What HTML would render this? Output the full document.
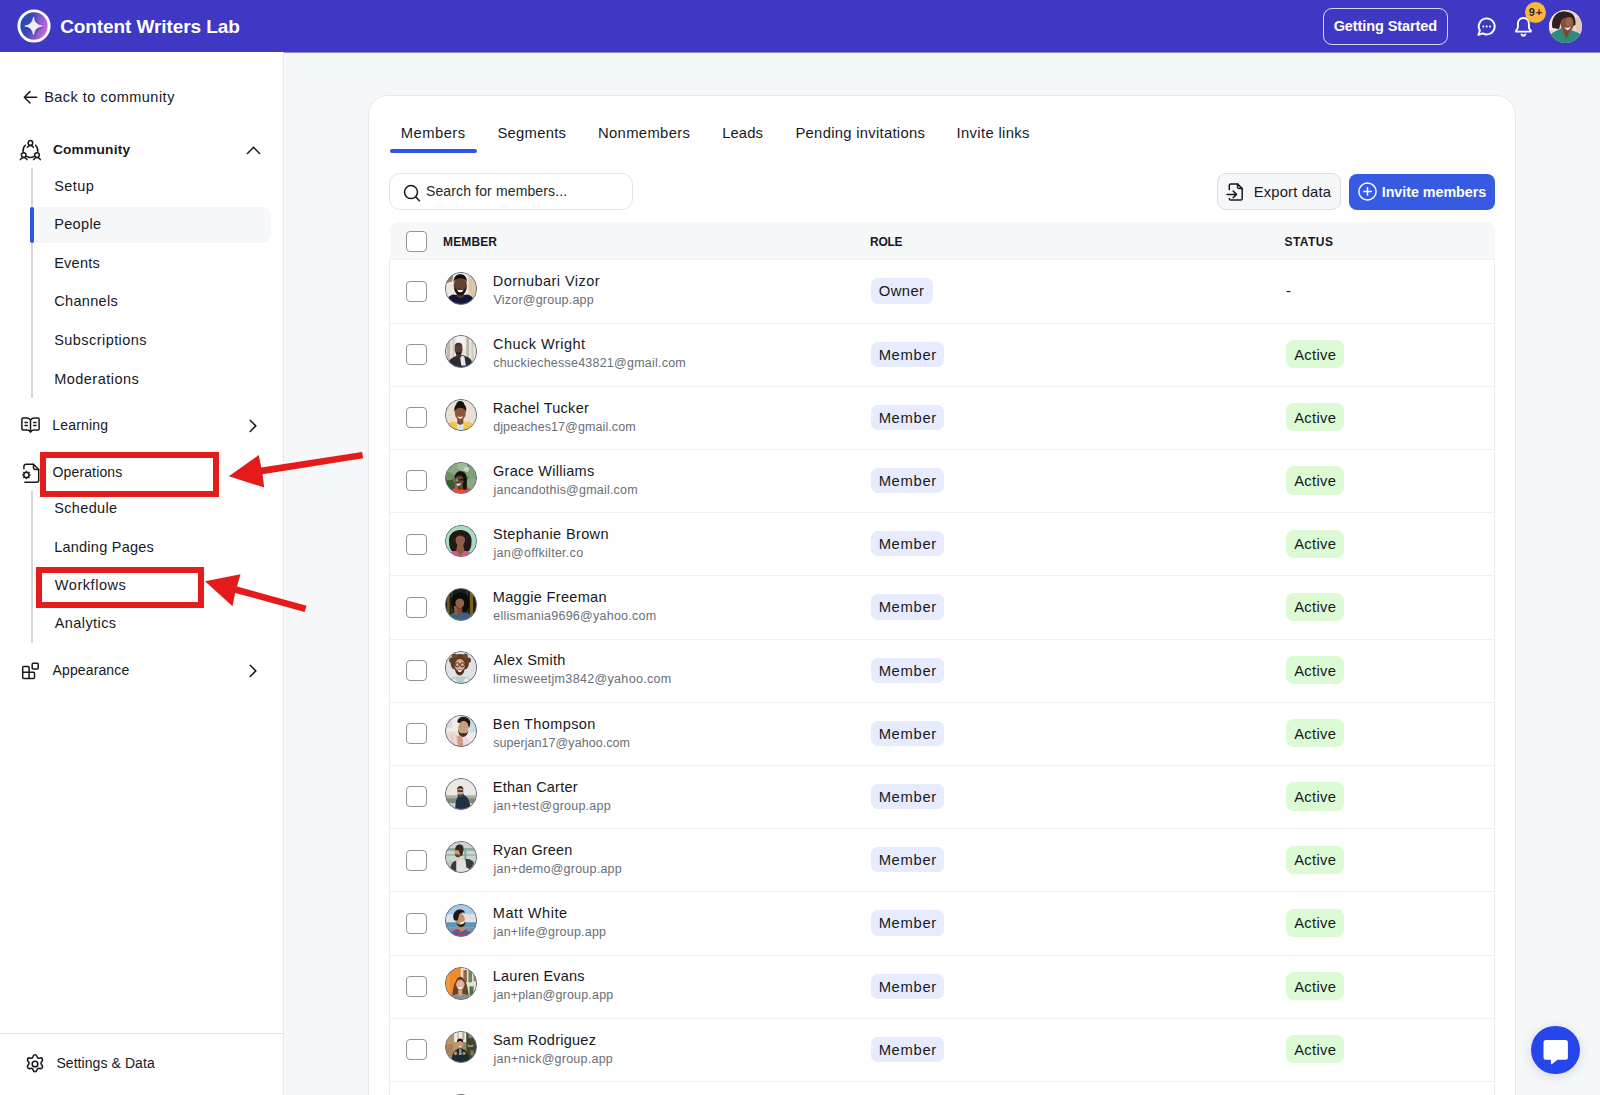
<!DOCTYPE html>
<html><head><meta charset="utf-8"><title>People</title>
<style>
*{box-sizing:border-box;margin:0;padding:0}
html,body{width:1600px;height:1095px;overflow:hidden;background:#f6f7f9;font-family:"Liberation Sans",sans-serif;color:#17191e}
svg{position:absolute;overflow:visible}
.ic{fill:none;stroke:#17191e;stroke-width:1.5;stroke-linecap:round;stroke-linejoin:round}
#hdr{position:absolute;left:0;top:0;width:1600px;height:52px;background:#3f38c4}
#side{position:absolute;left:0;top:52px;width:284px;height:1043px;background:#fff;border-right:1px solid #e8e9ed}
.t{position:absolute;white-space:nowrap;line-height:20px;height:20px}
#card{position:absolute;left:368px;top:95px;width:1148px;height:1040px;background:#fff;border:1px solid #e7e8ec;border-radius:20px}
.row{position:absolute;left:390px;width:1105px;height:1px;background:#eef0f3}
.cb{position:absolute;left:406px;width:21px;height:21px;border:1.5px solid #909399;border-radius:4px;background:#fff}
.av{position:absolute;left:444.6px;width:32.6px;height:32.6px;border-radius:50%;overflow:hidden;border:1.2px solid #666b80;background:#999}
.av svg{left:-1.2px;top:-1.2px;width:32.6px;height:32.6px;filter:blur(.6px)}
.pill{position:absolute;border-radius:6.5px}
</style></head><body>
<div id="hdr"><svg style="left:17.400px;top:9.400px" width="34" height="34" viewBox="0 0 34 34"><defs><linearGradient id="lg" x1="0" y1="0.2" x2="1" y2="0.5"><stop offset="0" stop-color="#0f52b5"/><stop offset=".4" stop-color="#3f47b8"/><stop offset=".75" stop-color="#9a5fd2"/><stop offset="1" stop-color="#cf68e2"/></linearGradient><filter id="sh" x="-30%" y="-30%" width="160%" height="160%"><feDropShadow dx=".6" dy=".9" stdDeviation="1.100" flood-color="#0a0a50" flood-opacity=".55"/></filter></defs><circle cx="17" cy="17" r="15.100" fill="url(#lg)" stroke="#fff" stroke-width="2.900"/><path d="M16.500 8.300Q17.500 16 25.200 17Q17.500 18 16.500 25.700Q15.500 18 7.800 17Q15.500 16 16.500 8.300z" fill="#f1ecfc" stroke="#f1ecfc" stroke-width=".7" stroke-linejoin="round" filter="url(#sh)"/></svg><div class="t" style="left:60.13px;top:16.50px;font-size:19px;color:#fff;letter-spacing:-0.079px;font-weight:bold">Content Writers Lab</div><div style="position:absolute;left:1323px;top:7.500px;width:125px;height:37.500px;border:1.500px solid rgba(255,255,255,.8);border-radius:9px"></div><div class="t" style="left:1333.64px;top:16.00px;font-size:14.5px;color:#fff;letter-spacing:-0.083px;font-weight:bold">Getting Started</div><svg style="left:1475.500px;top:16px" width="21" height="21" viewBox="0 0 21 21"><path d="M10.700 2.400a8 8 0 1 1-3.900 15L2.400 18.900l1.500-4.400A8 8 0 0 1 10.700 2.400z" fill="none" stroke="#fff" stroke-width="1.900" stroke-linejoin="round"/><circle cx="7.300" cy="10.500" r="1" fill="#fff"/><circle cx="10.700" cy="10.500" r="1" fill="#fff"/><circle cx="14.100" cy="10.500" r="1" fill="#fff"/></svg><svg style="left:1513px;top:15.500px" width="21" height="22" viewBox="0 0 21 22"><path d="M10.400 2c-3.400 0-5.500 2.600-5.500 5.700v3.400c0 1.400-.7 2.600-1.900 3.700v.8h14.800v-.8c-1.200-1.100-1.900-2.300-1.900-3.700V7.700c0-3.100-2.100-5.700-5.500-5.700z" fill="none" stroke="#fff" stroke-width="1.900" stroke-linejoin="round"/><path d="M8.600 18.400a1.900 1.900 0 0 0 3.600 0" fill="none" stroke="#fff" stroke-width="1.900" stroke-linecap="round"/></svg><div style="position:absolute;left:1525px;top:2.300px;width:21px;height:21px;border-radius:50%;background:#f9b63c;color:#2b2540;font-weight:bold;font-size:11px;line-height:20.500px;text-align:center;letter-spacing:.9px;text-indent:.9px">9+</div><div style="position:absolute;left:1549px;top:9.500px;width:33px;height:33px;border-radius:50%;overflow:hidden;background:#ead8ca"><svg style="left:0;top:0;filter:blur(.7px)" width="33" height="33" viewBox="0 0 33 33"><rect x="-2" y="-2" width="37" height="37" fill="#ead8ca"/><rect x="-2" y="-2" width="9" height="22" fill="#f3ebe4"/><rect x="27" y="8" width="8" height="14" fill="#e2c9b6"/><path d="M3.500 18c-1.500-6 .5-12 5.500-15c4-2.300 11-2 14.500 1c2.500 2.500 3.500 7 3 11l-2.500 1-1-6-10-1-3 10z" fill="#2e201d"/><path d="M-1 34c0-6 2-10 6-12l8-4 4 9 5-7 8 3c2 2 3 6 3 11z" fill="#2e8c7c"/><path d="M12.500 17l4.500 12 5.500-10z" fill="#7a4737"/><ellipse cx="18.200" cy="13.500" rx="6.500" ry="8.400" fill="#84503d"/><ellipse cx="20" cy="12" rx="3.500" ry="4.500" fill="#9a634d"/><path d="M15.800 17.300q3 1.300 6-.8q-1.200 3.600-3.400 3.600t-2.600-2.800z" fill="#f6f0f0"/><path d="M11.700 10.500c.8-4 3.800-6.500 7.300-6.500s5.500 1.500 6 4c-2-1-4-1.300-6.500-.8s-5 1.300-6.800 3.300z" fill="#2e201d"/></svg></div></div>
<div style="position:absolute;left:0;top:52px;width:1600px;height:1px;background:#8d89dd"></div><div id="side"></div>
<svg style="left:23px;top:90px" width="15" height="15" viewBox="0 0 15 15"><path class="ic" stroke-width="1.600" d="M13.700 7.300H1.500M7 1.600L1.300 7.300L7 13"/></svg><div class="t" style="left:44.14px;top:87.00px;font-size:14.5px;color:#17191e;letter-spacing:0.486px">Back to community</div><svg style="left:19px;top:139px" width="23" height="22" viewBox="0 0 23 22"><g class="ic" stroke-width="1.400"><circle cx="11.400" cy="3.900" r="2.300"/><path d="M8.300 8.300c.7-1.300 1.800-1.900 3.100-1.900s2.400.6 3.100 1.900"/><circle cx="4.700" cy="16.100" r="2.300"/><path d="M1.300 20.600c.7-1.400 1.900-2.100 3.400-2.100s2.700.7 3.400 2.100"/><circle cx="18" cy="16.100" r="2.300"/><path d="M14.600 20.600c.7-1.400 1.900-2.100 3.400-2.100s2.700.7 3.400 2.100"/><path d="M6.300 6.200a7.300 7.300 0 0 0-2.200 6.300M16.500 6.200a7.300 7.300 0 0 1 2.200 6.300M7.600 17.300a7.300 7.300 0 0 0 7.500 0"/></g></svg><div class="t" style="left:52.89px;top:139.50px;font-size:13.7px;color:#17191e;letter-spacing:0.245px;font-weight:bold">Community</div><svg style="left:245.600px;top:144.500px" width="15" height="10" viewBox="0 0 15 10"><path class="ic" stroke-width="1.600" d="M1.500 8.400L7.500 2.200l6 6.200"/></svg><div style="position:absolute;left:31px;top:168px;width:1.500px;height:230px;background:#d9d4d6"></div><div style="position:absolute;left:31px;top:491px;width:1.500px;height:151.500px;background:#d9d4d6"></div><div style="position:absolute;left:31px;top:207px;width:240px;height:36px;background:#f6f7f9;border-radius:0 9px 9px 0"></div><div style="position:absolute;left:30px;top:207px;width:4px;height:36px;background:#2f55e6;border-radius:2px"></div><div class="t" style="left:54.24px;top:176.00px;font-size:14.5px;color:#17191e;letter-spacing:0.392px">Setup</div><div class="t" style="left:54.14px;top:214.00px;font-size:14.5px;color:#17191e;letter-spacing:0.377px">People</div><div class="t" style="left:54.14px;top:253.00px;font-size:14.5px;color:#17191e;letter-spacing:0.270px">Events</div><div class="t" style="left:54.34px;top:291.00px;font-size:14.5px;color:#17191e;letter-spacing:0.294px">Channels</div><div class="t" style="left:54.24px;top:330.00px;font-size:14.5px;color:#17191e;letter-spacing:0.438px">Subscriptions</div><div class="t" style="left:54.14px;top:369.00px;font-size:14.5px;color:#17191e;letter-spacing:0.487px">Moderations</div><svg style="left:20px;top:416px" width="21" height="19" viewBox="0 0 21 19"><g class="ic" stroke-width="1.500"><path d="M10.500 4.200C9.600 2.800 8.300 2.100 6.600 2.100H2.900c-.6 0-1 .4-1 1v9.800c0 .6.400 1 1 1h4.300c1.500 0 2.600.7 3.300 2.400c.7-1.700 1.800-2.400 3.300-2.400h4.300c.6 0 1-.4 1-1V3.100c0-.6-.4-1-1-1h-3.700c-1.700 0-3 .7-3.900 2.100zM10.500 4.200v12"/><path d="M5 6.500h2.300M5 9.600h2.300M13.700 6.500H16M13.700 9.600H16"/></g></svg><div class="t" style="left:52.26px;top:415.00px;font-size:14px;color:#17191e;letter-spacing:0.187px">Learning</div><svg style="left:248px;top:419px" width="10" height="14" viewBox="0 0 10 14"><path class="ic" stroke-width="1.600" d="M2.200 1.300l5.600 5.600L2.200 12.500"/></svg><svg style="left:20.700px;top:462.800px" width="20" height="21" viewBox="0 0 20 21"><g class="ic" stroke-width="1.500"><path d="M2.900 5.800V3.300a2 2 0 0 1 2-2H12.500L17.700 6.500V17.200a2 2 0 0 1-2 2H3.900"/><path d="M12.500 1.300V4.500a2 2 0 0 0 2 2H17.700"/></g><circle cx="5.400" cy="11.900" r="2.600" fill="none" stroke="#17191e" stroke-width="1.500"/><g fill="none" stroke="#17191e" stroke-width="1.500"><path d="M0 -3.100V-4.200" transform="translate(5.400 11.900) rotate(0)"/><path d="M0 -3.100V-4.200" transform="translate(5.400 11.900) rotate(45)"/><path d="M0 -3.100V-4.200" transform="translate(5.400 11.900) rotate(90)"/><path d="M0 -3.100V-4.200" transform="translate(5.400 11.900) rotate(135)"/><path d="M0 -3.100V-4.200" transform="translate(5.400 11.900) rotate(180)"/><path d="M0 -3.100V-4.200" transform="translate(5.400 11.900) rotate(225)"/><path d="M0 -3.100V-4.200" transform="translate(5.400 11.900) rotate(270)"/><path d="M0 -3.100V-4.200" transform="translate(5.400 11.900) rotate(315)"/></g></svg><div class="t" style="left:52.51px;top:462.00px;font-size:14px;color:#17191e;letter-spacing:0.138px">Operations</div><div class="t" style="left:54.24px;top:498.00px;font-size:14.5px;color:#17191e;letter-spacing:0.349px">Schedule</div><div class="t" style="left:54.14px;top:537.00px;font-size:14.5px;color:#17191e;letter-spacing:0.247px">Landing Pages</div><div class="t" style="left:54.81px;top:575.00px;font-size:14.5px;color:#17191e;letter-spacing:0.556px">Workflows</div><div class="t" style="left:54.78px;top:613.00px;font-size:14.5px;color:#17191e;letter-spacing:0.414px">Analytics</div><svg style="left:21px;top:661px" width="19" height="19" viewBox="0 0 19 19"><g class="ic" stroke-width="1.500"><rect x="11.200" y="2.200" width="6" height="5.800" rx="1"/><path d="M8.100 11.300V6.600c0-.6-.4-1-1-1H2.700c-.6 0-1 .4-1 1v10c0 .6.400 1 1 1h9.800c.6 0 1-.4 1-1v-4.300c0-.6-.4-1-1-1H1.700M8.100 11.300v6.300"/></g></svg><div class="t" style="left:52.58px;top:660.00px;font-size:14px;color:#17191e;letter-spacing:0.123px">Appearance</div><svg style="left:248px;top:664px" width="10" height="14" viewBox="0 0 10 14"><path class="ic" stroke-width="1.600" d="M2.200 1.300l5.600 5.600L2.200 12.500"/></svg><div style="position:absolute;left:0;top:1033px;width:283px;height:1px;background:#e1e3e7"></div><svg style="left:23.500px;top:1053.200px" width="22" height="22" viewBox="0 0 21 21"><g class="ic" stroke-width="1.400"><circle cx="10.500" cy="10.500" r="2.700"/><path d="M10.500 1.700c1.300 0 1.800.9 2 2 .2 1 1.300 1.600 2.300 1.200 1.100-.4 2.100-.3 2.700.8.600 1.100.1 2-.7 2.800-.8.700-.8 1.900 0 2.600.8.800 1.300 1.700.7 2.800-.6 1.100-1.600 1.200-2.700.8-1-.4-2.100.2-2.300 1.200-.2 1.100-.7 2-2 2s-1.800-.9-2-2c-.2-1-1.300-1.600-2.300-1.200-1.100.4-2.100.3-2.700-.8-.6-1.100-.1-2 .7-2.800.8-.7.8-1.900 0-2.600-.8-.8-1.300-1.700-.7-2.800.6-1.100 1.600-1.200 2.700-.8 1 .4 2.100-.2 2.300-1.200.2-1.100.7-2 2-2z"/></g></svg><div class="t" style="left:56.39px;top:1053.00px;font-size:14px;color:#17191e;letter-spacing:0.073px">Settings &amp; Data</div>
<div id="card"></div>
<div class="t" style="left:400.64px;top:123.00px;font-size:14.8px;color:#17191e;letter-spacing:0.474px">Members</div><div class="t" style="left:497.42px;top:123.00px;font-size:14.8px;color:#17191e;letter-spacing:0.281px">Segments</div><div class="t" style="left:598.04px;top:123.00px;font-size:14.8px;color:#17191e;letter-spacing:0.338px">Nonmembers</div><div class="t" style="left:722.14px;top:123.00px;font-size:14.8px;color:#17191e;letter-spacing:0.140px">Leads</div><div class="t" style="left:795.44px;top:123.00px;font-size:14.8px;color:#17191e;letter-spacing:0.290px">Pending invitations</div><div class="t" style="left:956.49px;top:123.00px;font-size:14.8px;color:#17191e;letter-spacing:0.352px">Invite links</div><div style="position:absolute;left:389.600px;top:148.800px;width:87.300px;height:3.800px;border-radius:2px;background:#2f55e6"></div><div style="position:absolute;left:389.300px;top:173px;width:243.500px;height:37px;border:1px solid #e3e5e9;border-radius:11px;background:#fff"></div><svg style="left:402px;top:183px" width="20" height="20" viewBox="0 0 20 20"><g class="ic" stroke-width="1.700"><circle cx="9" cy="9.100" r="6.500"/><path d="M13.800 14l3.600 3.700"/></g></svg><div class="t" style="left:425.94px;top:181.00px;font-size:14px;color:#24272d;letter-spacing:0.136px">Search for members...</div><div style="position:absolute;left:1216.500px;top:173px;width:124px;height:37px;border:1px solid #d9dce1;border-radius:9px;background:#f6f7f9"></div><svg style="left:1226px;top:182px" width="19" height="20" viewBox="0 0 19 20"><g class="ic" stroke-width="1.500"><path d="M3.300 7.600V3.500c0-.9.700-1.600 1.600-1.600h6.600l4.700 4.700v9.800c0 .9-.7 1.600-1.600 1.600H4.900c-.9 0-1.600-.7-1.600-1.600"/><path d="M11.500 1.900v3.100c0 .9.700 1.600 1.600 1.600h3.100"/><path d="M1 12.400h9.300M7.100 9l3.400 3.400-3.400 3.400"/></g></svg><div class="t" style="left:1253.74px;top:182.00px;font-size:14.8px;color:#17191e;letter-spacing:0.154px">Export data</div><div style="position:absolute;left:1348.700px;top:173.500px;width:146.400px;height:36.500px;border-radius:8px;background:#365ae2"></div><svg style="left:1356.700px;top:181.200px" width="21" height="21" viewBox="0 0 21 21"><g fill="none" stroke="#fff" stroke-width="1.500" stroke-linecap="round"><circle cx="10.500" cy="10.500" r="8.600"/><path d="M10.500 6.700v7.600M6.700 10.500h7.600"/></g></svg><div class="t" style="left:1381.73px;top:182.00px;font-size:14.3px;color:#fff;letter-spacing:-0.035px;font-weight:bold">Invite members</div><div style="position:absolute;left:389.500px;top:222px;width:1105.500px;height:37.500px;background:#f6f7f9;border-radius:8px 8px 0 0"></div><div style="position:absolute;left:389px;top:259px;width:1px;height:840px;background:#eceef1"></div><div style="position:absolute;left:1494px;top:259px;width:1px;height:840px;background:#eceef1"></div><div class="cb" style="top:230.500px"></div><div class="t" style="left:443.03px;top:232.00px;font-size:12px;color:#17191e;letter-spacing:0.125px;font-weight:bold">MEMBER</div><div class="t" style="left:870.03px;top:232.00px;font-size:12px;color:#17191e;letter-spacing:-0.281px;font-weight:bold">ROLE</div><div class="t" style="left:1284.53px;top:232.00px;font-size:12px;color:#17191e;letter-spacing:0.437px;font-weight:bold">STATUS</div>
<div class="row" style="top:259.3px"></div><div class="cb" style="top:280.8px"></div><div class="av" style="top:272.1px"><svg viewBox="0 0 32 32"><rect width="32" height="32" fill="#ebe9e5"/><path d="M0 0h10l-2 9-8 3z" fill="#9c8062"/><rect x="24" width="8" height="32" fill="#d9c7a8"/><path d="M1 32c1-6 4-9 8-10l7 1 7-1c4 1 7 4 8 10z" fill="#13163a"/><path d="M12.500 19h7v5l-3.500 2-3.500-2z" fill="#56352a"/><ellipse cx="16" cy="13" rx="6.500" ry="8" fill="#65402f"/><path d="M9.500 10.500c-.3-6 3-8.300 6.500-8.300s6.800 2.300 6.500 8.300c-1-3.300-3.300-4.300-6.500-4.300s-5.500 1-6.500 4.300z" fill="#120e0d"/><path d="M9.700 14c.2 5.500 2.800 9 6.300 9s6.100-3.500 6.300-9c-1 2.500-1.800 3.200-3 3.200h-6.600c-1.200 0-2-.7-3-3.200z" fill="#1d1311"/><path d="M12.800 17.200q3.200 1 6.400 0q-.8 2.800-3.200 2.800t-3.200-2.800z" fill="#fff"/></svg></div><div class="t" style="left:492.84px;top:271.00px;font-size:14.5px;color:#17191e;letter-spacing:0.444px">Dornubari Vizor</div><div class="t" style="left:493.45px;top:290.00px;font-size:12.5px;color:#696e77;letter-spacing:0.219px">Vizor@group.app</div><div class="pill" style="left:871px;top:278.4px;width:61.8px;height:25.200px;background:#e6ebfd"></div><div class="t" style="left:878.87px;top:281.00px;font-size:14.8px;color:#17191e;letter-spacing:0.382px">Owner</div><div class="t" style="left:1286.02px;top:280.50px;font-size:15px;color:#17191e;letter-spacing:0.000px">-</div>
<div class="row" style="top:322.5px"></div><div class="cb" style="top:344.0px"></div><div class="av" style="top:335.3px"><svg viewBox="0 0 32 32"><rect width="32" height="32" fill="#e7e3db"/><rect x="3" width="3" height="32" fill="#c3baab"/><rect x="8.500" width="1.500" height="32" fill="#cfc8bb"/><rect x="12" y="0" width="9" height="14" fill="#f5f3ef"/><rect x="22" width="2.500" height="32" fill="#bdb4a5"/><rect x="27" width="2" height="32" fill="#d1cabd"/><path d="M4 32c0-5 1-8 4-9.500l5-2.500h6l5 2c3 1.500 4 5 4 10z" fill="#2a2c31"/><path d="M15.500 20l4.500 1 1.500 9h-4.500z" fill="#e6e8ee"/><path d="M12 17h5v5h-5z" fill="#4d3529"/><ellipse cx="14.300" cy="14" rx="3.900" ry="5" fill="#5b3e2f"/><path d="M10.400 12.500c0-3.500 1.700-4.800 3.900-4.800s3.900 1.300 3.900 4.800c-1-2-2.200-2.500-3.900-2.500s-2.900.5-3.900 2.500z" fill="#3b3533"/><path d="M11 16c.5 2.500 1.800 3.500 3.300 3.500s2.800-1 3.300-3.500c-1 1-2 1.300-3.300 1.300s-2.300-.3-3.300-1.300z" fill="#241a17"/></svg></div><div class="t" style="left:493.04px;top:334.00px;font-size:14.5px;color:#17191e;letter-spacing:0.482px">Chuck Wright</div><div class="t" style="left:493.20px;top:353.00px;font-size:12.5px;color:#696e77;letter-spacing:0.228px">chuckiechesse43821@gmail.com</div><div class="pill" style="left:871px;top:341.6px;width:73px;height:25.200px;background:#e6ebfd"></div><div class="t" style="left:878.64px;top:345.00px;font-size:14.8px;color:#17191e;letter-spacing:0.662px">Member</div><div class="pill" style="left:1286px;top:340.0px;width:57.800px;height:28.200px;border-radius:7.500px;background:#dcfbd4"></div><div class="t" style="left:1294.18px;top:345.00px;font-size:14.8px;color:#17191e;letter-spacing:0.321px">Active</div>
<div class="row" style="top:385.7px"></div><div class="cb" style="top:407.2px"></div><div class="av" style="top:398.5px"><svg viewBox="0 0 32 32"><rect width="32" height="32" fill="#eadfd2"/><path d="M1 32c1-6 4-8 8-9l7 2 7-2c4 1 7 3 8 9z" fill="#f1c748"/><path d="M12.500 24h7l-.500 8h-6z" fill="#d3e6ef"/><path d="M13 19h6v6l-3 1.500-3-1.500z" fill="#7c4b33"/><ellipse cx="16" cy="15" rx="5.300" ry="6.600" fill="#8a5639"/><path d="M10.500 14c-1-3 0-6 1.500-7.500c0-2 2-3.500 4-3.500s4 1.500 4 3.500c1.500 1.500 2.500 4.500 1.500 7.500c-.5-3-2.500-4.500-5.500-4.500s-5 1.500-5.500 4.500z" fill="#14100e"/><path d="M13.300 18q2.700 1.200 5.400 0q-.7 2.400-2.700 2.400t-2.700-2.400z" fill="#fff"/></svg></div><div class="t" style="left:492.84px;top:398.00px;font-size:14.5px;color:#17191e;letter-spacing:0.276px">Rachel Tucker</div><div class="t" style="left:493.20px;top:417.00px;font-size:12.5px;color:#696e77;letter-spacing:0.095px">djpeaches17@gmail.com</div><div class="pill" style="left:871px;top:404.8px;width:73px;height:25.200px;background:#e6ebfd"></div><div class="t" style="left:878.64px;top:408.00px;font-size:14.8px;color:#17191e;letter-spacing:0.662px">Member</div><div class="pill" style="left:1286px;top:403.2px;width:57.800px;height:28.200px;border-radius:7.500px;background:#dcfbd4"></div><div class="t" style="left:1294.18px;top:408.00px;font-size:14.8px;color:#17191e;letter-spacing:0.321px">Active</div>
<div class="row" style="top:448.9px"></div><div class="cb" style="top:470.4px"></div><div class="av" style="top:461.7px"><svg viewBox="0 0 32 32"><rect width="32" height="32" fill="#5f8057"/><circle cx="8" cy="6" r="7" fill="#86a97e"/><circle cx="18" cy="4" r="5" fill="#9dbb95"/><circle cx="27" cy="10" r="6" fill="#7fa177"/><circle cx="28" cy="21" r="6" fill="#8aa886"/><circle cx="4" cy="23" r="7" fill="#3c5935"/><circle cx="5" cy="14" r="4" fill="#6d8f64"/><circle cx="22" cy="7" r="2.500" fill="#c4d8bd"/><path d="M5 32c1-4 4-6.500 8-7h7c4 .5 7 3 8 7z" fill="#ee4a32"/><path d="M10.500 16c0-4.500 2.500-6.800 5.500-6.800s6.500 2.200 6.500 8l-.300 10h-3.700l-1-8z" fill="#17110f"/><ellipse cx="15" cy="18.300" rx="4.300" ry="5.400" fill="#68422f" transform="rotate(-8 15 18.300)"/><path d="M10.500 15.500c1-3.600 3-5.500 5.800-5.500s4.700 1.500 5.200 4.200c-2-1.300-3.800-1.800-5.700-1.300s-3.800 1-5.300 2.600z" fill="#17110f"/><path d="M10.600 17.200h4m1 0h4" stroke="#15131a" stroke-width="1.200"/><circle cx="12.600" cy="17.400" r="1.500" fill="#c9c4c4" opacity=".6"/><path d="M12 21q2.500 1 5-.4q-.8 2.600-2.800 2.600t-2.200-2.200z" fill="#f3eeee"/><path d="M13.500 24h4v3h-4z" fill="#5a3829"/></svg></div><div class="t" style="left:493.04px;top:461.00px;font-size:14.5px;color:#17191e;letter-spacing:0.279px">Grace Williams</div><div class="t" style="left:493.51px;top:480.00px;font-size:12.5px;color:#696e77;letter-spacing:0.202px">jancandothis@gmail.com</div><div class="pill" style="left:871px;top:468.0px;width:73px;height:25.200px;background:#e6ebfd"></div><div class="t" style="left:878.64px;top:471.00px;font-size:14.8px;color:#17191e;letter-spacing:0.662px">Member</div><div class="pill" style="left:1286px;top:466.4px;width:57.800px;height:28.200px;border-radius:7.500px;background:#dcfbd4"></div><div class="t" style="left:1294.18px;top:471.00px;font-size:14.8px;color:#17191e;letter-spacing:0.321px">Active</div>
<div class="row" style="top:512.1px"></div><div class="cb" style="top:533.6px"></div><div class="av" style="top:524.9px"><svg viewBox="0 0 32 32"><rect width="32" height="32" fill="#a7dcc1"/><path d="M5 17c-1-7 4-12 11-12s12 5 11 12c0 4-1 7-3 9h-16c-2-2-3-5-3-9z" fill="#241916"/><path d="M4 32c1-4 4-6 7-6.500h10c3 .5 6 2.500 7 6.500z" fill="#e2528c"/><path d="M4 32c.500-3 2-5 4-6l2 6zM28 32c-.500-3-2-5-4-6l-2 6z" fill="#3aa9b8"/><path d="M12 25l4 6 4-6-1-5h-6z" fill="#8d5c42"/><ellipse cx="16" cy="14.500" rx="4.700" ry="6.200" fill="#8f5e44"/><path d="M11.300 13c0-3.500 2-5.500 4.700-5.500s4.700 2 4.700 5.500c-1.500-2-3-2.800-4.700-2.800s-3.200.8-4.700 2.800z" fill="#241916"/></svg></div><div class="t" style="left:492.94px;top:524.00px;font-size:14.5px;color:#17191e;letter-spacing:0.365px">Stephanie Brown</div><div class="t" style="left:493.51px;top:543.00px;font-size:12.5px;color:#696e77;letter-spacing:0.279px">jan@offkilter.co</div><div class="pill" style="left:871px;top:531.2px;width:73px;height:25.200px;background:#e6ebfd"></div><div class="t" style="left:878.64px;top:534.00px;font-size:14.8px;color:#17191e;letter-spacing:0.662px">Member</div><div class="pill" style="left:1286px;top:529.6px;width:57.800px;height:28.200px;border-radius:7.500px;background:#dcfbd4"></div><div class="t" style="left:1294.18px;top:534.00px;font-size:14.8px;color:#17191e;letter-spacing:0.321px">Active</div>
<div class="row" style="top:575.3px"></div><div class="cb" style="top:596.8px"></div><div class="av" style="top:588.1px"><svg viewBox="0 0 32 32"><rect width="32" height="32" fill="#182116"/><rect x="3" width="2.500" height="32" fill="#6e5817"/><rect x="7" width="1.500" height="32" fill="#33421c"/><rect x="25.500" width="3" height="32" fill="#7a6119"/><rect x="22" width="1.500" height="32" fill="#2f3d1b"/><path d="M7 14c0-6 4-9.500 9-9.500s9 3.500 9 9.500c0 5-2 8-4 10h-10c-2-2-4-5-4-10z" fill="#0d0a09"/><path d="M3 32c1-5 4-7 8-8h10c4 1 7 3 8 8z" fill="#3f5f88"/><path d="M13 20h5v5l-2.500 1.500-2.500-1.500z" fill="#7b4c39"/><ellipse cx="15.500" cy="14.500" rx="4.300" ry="5.700" fill="#91604a"/><path d="M11.200 13c0-3.500 1.800-5.300 4.300-5.300s4.300 1.800 4.300 5.300c-1.500-2-2.800-2.600-4.300-2.600s-2.800.6-4.300 2.600z" fill="#0d0a09"/><path d="M9.500 17.500c1.500-.5 3 .5 3.500 2.500l.500 6h-3z" fill="#91604a"/></svg></div><div class="t" style="left:492.84px;top:587.00px;font-size:14.5px;color:#17191e;letter-spacing:0.310px">Maggie Freeman</div><div class="t" style="left:493.20px;top:606.00px;font-size:12.5px;color:#696e77;letter-spacing:0.250px">ellismania9696@yahoo.com</div><div class="pill" style="left:871px;top:594.4px;width:73px;height:25.200px;background:#e6ebfd"></div><div class="t" style="left:878.64px;top:597.00px;font-size:14.8px;color:#17191e;letter-spacing:0.662px">Member</div><div class="pill" style="left:1286px;top:592.8px;width:57.800px;height:28.200px;border-radius:7.500px;background:#dcfbd4"></div><div class="t" style="left:1294.18px;top:597.00px;font-size:14.8px;color:#17191e;letter-spacing:0.321px">Active</div>
<div class="row" style="top:638.5px"></div><div class="cb" style="top:660.0px"></div><div class="av" style="top:651.3px"><svg viewBox="0 0 32 32"><rect width="32" height="32" fill="#dfe2e7"/><path d="M3 32c1-4 4-6 8-7h10c4 1 7 3 8 7z" fill="#b5d0c6"/><path d="M7 30l3-3 3 3-3 2zM19 29l3-3 3 3-3 3z" fill="#e8f1ec"/><path d="M6.500 12c-1-5 3-9 9-9s10 4 9 9c0 3-1.500 5-3 6h-12c-1.500-1-3-3-3-6z" fill="#5f3d22"/><circle cx="7.500" cy="9" r="2.500" fill="#5f3d22"/><circle cx="24" cy="9" r="2.500" fill="#5f3d22"/><circle cx="10" cy="5" r="2.500" fill="#6b4627"/><circle cx="21" cy="5" r="2.500" fill="#6b4627"/><ellipse cx="15.500" cy="14.500" rx="5" ry="6.600" fill="#dba98a"/><path d="M10.500 15.500c.2 5.500 2.300 8.500 5 8.500s4.800-3 5-8.500c-.8 2.300-1.600 3-2.600 3h-4.800c-1 0-1.800-.7-2.600-3z" fill="#4d311c"/><circle cx="13" cy="13.500" r="2" fill="none" stroke="#2a1f1a" stroke-width=".8"/><circle cx="18" cy="13.500" r="2" fill="none" stroke="#2a1f1a" stroke-width=".8"/><path d="M13 18.500q2.500 1 5 0q-.6 2.200-2.500 2.200t-2.500-2.200z" fill="#fff"/></svg></div><div class="t" style="left:493.48px;top:650.00px;font-size:14.5px;color:#17191e;letter-spacing:0.285px">Alex Smith</div><div class="t" style="left:493.00px;top:669.00px;font-size:12.5px;color:#696e77;letter-spacing:0.327px">limesweetjm3842@yahoo.com</div><div class="pill" style="left:871px;top:657.6px;width:73px;height:25.200px;background:#e6ebfd"></div><div class="t" style="left:878.64px;top:661.00px;font-size:14.8px;color:#17191e;letter-spacing:0.662px">Member</div><div class="pill" style="left:1286px;top:656.0px;width:57.800px;height:28.200px;border-radius:7.500px;background:#dcfbd4"></div><div class="t" style="left:1294.18px;top:661.00px;font-size:14.8px;color:#17191e;letter-spacing:0.321px">Active</div>
<div class="row" style="top:701.7px"></div><div class="cb" style="top:723.2px"></div><div class="av" style="top:714.5px"><svg viewBox="0 0 32 32"><rect width="32" height="32" fill="#efedea"/><rect x="25" y="4" width="7" height="14" fill="#c9dbe6"/><rect x="0" y="6" width="8" height="8" fill="#e3dcd2"/><path d="M0 19c4-2 9-2.500 13-1l8 4c3 2 5 5 5 10h-26z" fill="#ecd9d8"/><path d="M2 22l3 10M7 20l3 12M12 21l2 11" stroke="#d9a9a8" stroke-width=".7"/><path d="M13 8c.500-4 4-6 8-5s5.500 4 4.500 8l-1 3-1.500-4c-3 .5-7-.5-10-2z" fill="#1d1816"/><ellipse cx="19" cy="13.500" rx="5" ry="6.600" fill="#cd9c7c" transform="rotate(8 19 13.500)"/><path d="M13.800 15c.2 5 2.200 7.500 4.700 7.500s5-2 5.500-6.500c-1 2-2 2.800-3 2.800h-4.200c-1.200 0-2-1-3-3.800z" fill="#3d2a20"/><path d="M14 12.500h4m1.500.3h4" stroke="#9aa0a8" stroke-width=".9"/><path d="M13 22c2-1.500 4-1 5 1l1 9h-5z" fill="#cd9c7c"/></svg></div><div class="t" style="left:492.84px;top:714.00px;font-size:14.5px;color:#17191e;letter-spacing:0.410px">Ben Thompson</div><div class="t" style="left:493.19px;top:733.00px;font-size:12.5px;color:#696e77;letter-spacing:0.058px">superjan17@yahoo.com</div><div class="pill" style="left:871px;top:720.8px;width:73px;height:25.200px;background:#e6ebfd"></div><div class="t" style="left:878.64px;top:724.00px;font-size:14.8px;color:#17191e;letter-spacing:0.662px">Member</div><div class="pill" style="left:1286px;top:719.2px;width:57.800px;height:28.200px;border-radius:7.500px;background:#dcfbd4"></div><div class="t" style="left:1294.18px;top:724.00px;font-size:14.8px;color:#17191e;letter-spacing:0.321px">Active</div>
<div class="row" style="top:764.9px"></div><div class="cb" style="top:786.4px"></div><div class="av" style="top:777.7px"><svg viewBox="0 0 32 32"><rect width="32" height="32" fill="#e9e8e3"/><rect y="17" width="32" height="4" fill="#a9b0a6"/><rect y="20" width="32" height="5" fill="#7f8a7c"/><rect y="25" width="32" height="7" fill="#c9cec6"/><path d="M11 32c0-7 1-12 3-14l3-1.500 4 1c3 2 5 7 5 14.500z" fill="#1d3342"/><path d="M13 17l3.500 3 3.500-2.500-1-2.500h-5z" fill="#2a4557"/><ellipse cx="16" cy="13" rx="3.100" ry="3.900" fill="#d2a184"/><path d="M12.900 12c0-3 1.300-4.200 3.100-4.200s3.100 1.200 3.100 4.200c-1-1.500-2-2-3.100-2s-2.100.5-3.100 2z" fill="#33251d"/><path d="M13.300 12.800h5.400" stroke="#16120f" stroke-width="1.300"/><path d="M14 15.500q2 1.800 4 0v1.500h-4z" fill="#5b4030"/></svg></div><div class="t" style="left:492.84px;top:777.00px;font-size:14.5px;color:#17191e;letter-spacing:0.230px">Ethan Carter</div><div class="t" style="left:493.51px;top:796.00px;font-size:12.5px;color:#696e77;letter-spacing:0.236px">jan+test@group.app</div><div class="pill" style="left:871px;top:784.0px;width:73px;height:25.200px;background:#e6ebfd"></div><div class="t" style="left:878.64px;top:787.00px;font-size:14.8px;color:#17191e;letter-spacing:0.662px">Member</div><div class="pill" style="left:1286px;top:782.4px;width:57.800px;height:28.200px;border-radius:7.500px;background:#dcfbd4"></div><div class="t" style="left:1294.18px;top:787.00px;font-size:14.8px;color:#17191e;letter-spacing:0.321px">Active</div>
<div class="row" style="top:828.1px"></div><div class="cb" style="top:849.6px"></div><div class="av" style="top:840.9px"><svg viewBox="0 0 32 32"><rect width="32" height="32" fill="#cdd5cf"/><rect y="7" width="32" height="2.500" fill="#86a79c"/><rect y="13" width="32" height="1.500" fill="#9db5ab"/><rect x="20" y="7" width="2" height="14" fill="#86a79c"/><rect y="20" width="32" height="12" fill="#b8c3bc"/><path d="M7 32c0-6 1-10 4-12l5-2 6 1c3 1 4 5 4 13z" fill="#e2e0dc"/><path d="M6 32c0-6 1-10 4-12l2-.5v12.500z" fill="#3a3c37"/><path d="M21 18c4-1 7 1 8.500 4l-3.500 6-4-2z" fill="#3a3c37"/><path d="M26 27l3.500-5 1 1.500-2 5z" fill="#c79675"/><ellipse cx="14" cy="10.500" rx="3.800" ry="4.900" fill="#c99877"/><path d="M11 9c0-4 2-5.500 4.500-5.500s4.500 2 3.500 6l-1 5h-2l-1.500-5.500z" fill="#3a291e"/><path d="M10.500 12.500c.5 2.500 1.500 3.500 3 3.500s2.500-.5 3-2l-2.500-.5z" fill="#5a3d2a"/></svg></div><div class="t" style="left:492.84px;top:840.00px;font-size:14.5px;color:#17191e;letter-spacing:0.134px">Ryan Green</div><div class="t" style="left:493.51px;top:859.00px;font-size:12.5px;color:#696e77;letter-spacing:0.236px">jan+demo@group.app</div><div class="pill" style="left:871px;top:847.2px;width:73px;height:25.200px;background:#e6ebfd"></div><div class="t" style="left:878.64px;top:850.00px;font-size:14.8px;color:#17191e;letter-spacing:0.662px">Member</div><div class="pill" style="left:1286px;top:845.6px;width:57.800px;height:28.200px;border-radius:7.500px;background:#dcfbd4"></div><div class="t" style="left:1294.18px;top:850.00px;font-size:14.8px;color:#17191e;letter-spacing:0.321px">Active</div>
<div class="row" style="top:891.3px"></div><div class="cb" style="top:912.8px"></div><div class="av" style="top:904.1px"><svg viewBox="0 0 32 32"><rect width="32" height="32" fill="#a6cae8"/><rect y="10" width="32" height="8" fill="#dbe3ec"/><rect x="18" y="11" width="14" height="5" fill="#e9dcd9"/><rect y="18" width="32" height="5" fill="#5e94b4"/><rect y="23" width="32" height="9" fill="#7a96a6"/><path d="M6 32c1-4 3-6 6-7l6-.5c5 .5 8 3 9 7.500z" fill="#a63d55"/><path d="M8 32l4-6M14 32l3-7M20 32l2-6M6 28h22" stroke="#4d62a8" stroke-width="1.300"/><path d="M13 21l6 .5 2 4-5 2z" fill="#c08a68"/><ellipse cx="15.500" cy="14.500" rx="4.800" ry="5.900" fill="#c6906e" transform="rotate(-18 15.500 14.500)"/><path d="M9.500 15c-1.500-5 1.500-9 5.500-9.500c3-.3 5 1 5.500 3c-2-.5-4 0-5.500 1.500l-1.500 6c-2 .5-3.500 0-4-1z" fill="#1c1512"/><path d="M12 18c1 3.500 3 5 5.500 4.500s3.500-2.500 3.500-5c-1 1.500-2.500 2.500-4.500 2.800s-3.500-.5-4.500-2.300z" fill="#241915"/><path d="M16 17.800q2.500.5 4.300-1.500q-.5 3-2.500 3.300t-1.800-1.800z" fill="#fff"/></svg></div><div class="t" style="left:492.84px;top:903.00px;font-size:14.5px;color:#17191e;letter-spacing:0.552px">Matt White</div><div class="t" style="left:493.51px;top:922.00px;font-size:12.5px;color:#696e77;letter-spacing:0.213px">jan+life@group.app</div><div class="pill" style="left:871px;top:910.4px;width:73px;height:25.200px;background:#e6ebfd"></div><div class="t" style="left:878.64px;top:913.00px;font-size:14.8px;color:#17191e;letter-spacing:0.662px">Member</div><div class="pill" style="left:1286px;top:908.8px;width:57.800px;height:28.200px;border-radius:7.500px;background:#dcfbd4"></div><div class="t" style="left:1294.18px;top:913.00px;font-size:14.8px;color:#17191e;letter-spacing:0.321px">Active</div>
<div class="row" style="top:954.5px"></div><div class="cb" style="top:976.0px"></div><div class="av" style="top:967.3px"><svg viewBox="0 0 32 32"><rect width="32" height="32" fill="#e6e1d6"/><rect width="16.500" height="32" fill="#ef8b2b"/><rect x="0" width="6" height="32" fill="#f29a3a"/><rect x="19" y="3" width="3.500" height="12" fill="#8b6b49"/><rect x="24" y="3" width="3.500" height="12" fill="#6f8467"/><rect x="29" y="4" width="3" height="10" fill="#9a7d58"/><rect x="25" y="19" width="4" height="9" fill="#55704f"/><path d="M8 32c.500-10 2-21 8-21s7.500 8 8.500 21z" fill="#65442c"/><path d="M5 32c1-3 4-5 8-5.500h7c4 .5 6 2.500 7 5.500z" fill="#8c8f92"/><path d="M14 22h4v5l-2 1-2-1z" fill="#d9a587"/><ellipse cx="16" cy="17" rx="4.100" ry="5.400" fill="#e3b294"/><path d="M11.900 16c-.2-4 1.600-6.500 4.100-6.500s4.300 2.500 4.100 6.500c-1.200-2.500-2.500-3.500-4.100-3.500s-2.900 1-4.100 3.500z" fill="#65442c"/><path d="M13.800 19.300q2.200 1 4.400 0q-.5 2.200-2.200 2.200t-2.200-2.200z" fill="#fff"/></svg></div><div class="t" style="left:492.84px;top:966.00px;font-size:14.5px;color:#17191e;letter-spacing:0.202px">Lauren Evans</div><div class="t" style="left:493.51px;top:985.00px;font-size:12.5px;color:#696e77;letter-spacing:0.184px">jan+plan@group.app</div><div class="pill" style="left:871px;top:973.6px;width:73px;height:25.200px;background:#e6ebfd"></div><div class="t" style="left:878.64px;top:977.00px;font-size:14.8px;color:#17191e;letter-spacing:0.662px">Member</div><div class="pill" style="left:1286px;top:972.0px;width:57.800px;height:28.200px;border-radius:7.500px;background:#dcfbd4"></div><div class="t" style="left:1294.18px;top:977.00px;font-size:14.8px;color:#17191e;letter-spacing:0.321px">Active</div>
<div class="row" style="top:1017.7px"></div><div class="cb" style="top:1039.2px"></div><div class="av" style="top:1030.5px"><svg viewBox="0 0 32 32"><rect width="32" height="32" fill="#9c8560"/><rect width="13" height="32" fill="#b9976a"/><rect x="0" y="14" width="9" height="18" fill="#a98356"/><rect x="10" y="0" width="12" height="12" fill="#f1eee7"/><rect x="13" y="1" width="1.500" height="12" fill="#c9b79a"/><rect x="18" y="0" width="2" height="10" fill="#b8a98c"/><rect x="22" y="2" width="10" height="30" fill="#3a4434"/><rect x="24" y="0" width="4" height="8" fill="#8a8468"/><path d="M23 14q3 2 6 0v2q-3 2-6 0z" fill="#a98a66"/><rect x="26" y="20" width="3" height="5" fill="#8a7656"/><path d="M7.500 32c0-6 1-10 3.500-12l5-2.500 5 2.500c2.500 2 3.500 6 3.500 12z" fill="#1d2a30"/><path d="M15 18.500h2l.500 6h-3z" fill="#8b959a"/><ellipse cx="15.800" cy="13.800" rx="3.200" ry="4.100" fill="#c89873"/><path d="M12.600 12.800c0-3 1.300-4.400 3.200-4.400s3.200 1.400 3.200 4.400c-1-1.500-2-2-3.200-2s-2.200.5-3.200 2z" fill="#120f0d"/><ellipse cx="11.300" cy="22.800" rx="1.600" ry="2" fill="#b88a62"/><ellipse cx="19.700" cy="22.800" rx="1.600" ry="1.500" fill="#b88a62"/><path d="M14.500 15.500q1.300.7 2.600 0q-.3 1.500-1.300 1.500t-1.300-1.500z" fill="#f2eeee"/></svg></div><div class="t" style="left:492.94px;top:1030.00px;font-size:14.5px;color:#17191e;letter-spacing:0.256px">Sam Rodriguez</div><div class="t" style="left:493.51px;top:1049.00px;font-size:12.5px;color:#696e77;letter-spacing:0.242px">jan+nick@group.app</div><div class="pill" style="left:871px;top:1036.8px;width:73px;height:25.200px;background:#e6ebfd"></div><div class="t" style="left:878.64px;top:1040.00px;font-size:14.8px;color:#17191e;letter-spacing:0.662px">Member</div><div class="pill" style="left:1286px;top:1035.2px;width:57.800px;height:28.200px;border-radius:7.500px;background:#dcfbd4"></div><div class="t" style="left:1294.18px;top:1040.00px;font-size:14.8px;color:#17191e;letter-spacing:0.321px">Active</div>
<div class="row" style="top:1080.9px"></div><div class="av" style="top:1093.5px;background:#8b8f9c"></div><div style="position:absolute;left:1531.200px;top:1025.900px;width:48.500px;height:48.500px;border-radius:50%;background:#2745ec;box-shadow:0 2px 12px rgba(30,30,60,.14)"></div><svg style="left:1543px;top:1039px" width="26" height="27" viewBox="0 0 26 27"><path d="M3 .9h19.400a2.500 2.500 0 0 1 2.500 2.500v14.900a2.500 2.500 0 0 1-2.500 2.500H14.600l-5.800 4.400-.9-.3v-4.100H3A2.500 2.500 0 0 1 .5 18.300V3.400A2.500 2.500 0 0 1 3 .9z" fill="#fff"/></svg><div style="position:absolute;left:40px;top:451.700px;width:179.300px;height:45.300px;border:solid #e41b1b;border-width:6.300px 6.800px"></div><div style="position:absolute;left:36.200px;top:567px;width:168.100px;height:41px;border:solid #e41b1b;border-width:6.300px 6.100px 6.300px 6.800px"></div><svg style="left:0;top:0" width="1600" height="1095" viewBox="0 0 1600 1095"><g fill="#e41b1b"><path d="M228.800 476.200L258.800 455L261.300 467.600L362 452L363.200 458.200L262.600 474.300L264.200 487.600z"/><path d="M205 581.200L240.500 574.300L237 586.600L306.600 605.800L304.600 612L235.200 592.900L232.500 606.300z"/></g></svg>
</body></html>
